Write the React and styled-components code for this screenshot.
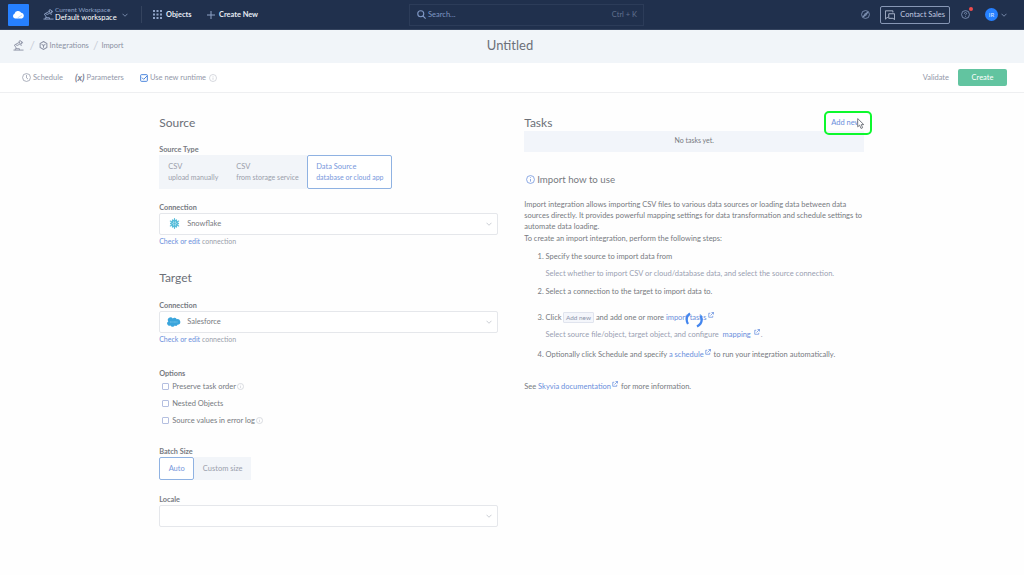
import React, { useState } from "react";
import styled, { createGlobalStyle, css } from "styled-components";

const options = [
  { label: "Preserve task order", info: true },
  { label: "Nested Objects", info: false },
  { label: "Source values in error log", info: true },
];

const sourceTypes = [
  { title: "CSV", text: "upload manually", width: 68 },
  { title: "CSV", text: "from storage service", width: 80 },
  { title: "Data Source", text: "database or cloud app", width: 85 },
];

const RobotIcon = ({ size = 12 }) => (
  <Icon $size={size} viewBox="0 0 24 24">
    <path d="M1 22h22M5 22v-3h9v3M8 19L3 11l11-6M6 10l3 2 6-3M13 3l3 6 4-2-4-6zM18 3l4 3M17 9l1 4" />
  </Icon>
);

const InfoIcon = ({ size = 8 }) => (
  <Icon $size={size} viewBox="0 0 24 24">
    <circle cx="12" cy="12" r="10.5" />
    <path d="M12 10.5v7M12 6v2" />
  </Icon>
);

const Chevron = () => (
  <Icon $size={6} viewBox="0 0 24 24" $stroke={3}>
    <path d="M2 7l10 10L22 7" />
  </Icon>
);

const ExternalIcon = () => (
  <LinkIcon viewBox="0 0 24 24">
    <path d="M9 5H3v16h16v-6M14 2h8v8M22 2L10 14" />
  </LinkIcon>
);

function Header() {
  return (
    <TopBar>
      <Logo>
        <svg width="13" height="9" viewBox="0 0 26 18">
          <path
            fill="#fff"
            d="M6 17a5 5 0 0 1-1-9.500A7.500 7.500 0 0 1 18.500 5.500 6 6 0 0 1 20 17z"
          />
          <path
            d="M11 16l9-6"
            stroke="#a9cbff"
            strokeWidth="1.500"
            fill="none"
          />
        </svg>
      </Logo>
      <Workspace>
        <RobotIcon size={11} />
        <div>
          <small>Current Workspace</small>
          <strong>Default workspace</strong>
        </div>
        <Chevron />
      </Workspace>
      <NavItem $width={43}>
        <svg width="9" height="9" viewBox="0 0 9 9" fill="#8fa3c7">
          {[0, 3.5, 7].map((y) =>
            [0, 3.5, 7].map((x) => (
              <rect key={`${x}-${y}`} x={x} y={y} width="2" height="2" />
            ))
          )}
        </svg>
        Objects
      </NavItem>
      <NavItem>
        <Icon $size={8} viewBox="0 0 24 24" $stroke={3}>
          <path d="M12 0v24M0 12h24" />
        </Icon>
        Create New
      </NavItem>
      <Search>
        <Icon $size={9} viewBox="0 0 24 24" $stroke={3}>
          <circle cx="10" cy="10" r="8" />
          <path d="M16 16l7 7" />
        </Icon>
        <span>Search...</span>
        <kbd>Ctrl + K</kbd>
      </Search>
      <Account>
        <Icon $size={9} viewBox="0 0 24 24">
          <circle cx="12" cy="12" r="10.500" />
          <path d="M18 6l-4 8-8 4 4-8zM18 6L6 18" />
        </Icon>
        <ContactButton>
          <Icon $size={10} viewBox="0 0 24 24">
            <path d="M7 18H5l-4 4V2h18v4M9 9h14v14l-4-3H9z" />
          </Icon>
          Contact Sales
        </ContactButton>
        <Help>
          <Icon $size={9} viewBox="0 0 24 24">
            <circle cx="12" cy="12" r="10.500" />
            <path d="M9 10c0-5 6-4 6-1 0 2-3 2-3 5M12 16v2" />
          </Icon>
        </Help>
        <Avatar>IR</Avatar>
        <Chevron />
      </Account>
    </TopBar>
  );
}

function Select({ icon, value }) {
  return (
    <SelectBox>
      {icon && <SelectIcon>{icon}</SelectIcon>}
      <span>{value}</span>
      <Chevron />
    </SelectBox>
  );
}

const Snowflake = () => (
  <svg width="11" height="11" viewBox="0 0 24 24">
    <g stroke="#55bcd9" strokeWidth="2.600" fill="none" strokeLinecap="round">
      {[0, 60, 120, 180, 240, 300].map((angle) => (
        <path
          key={angle}
          transform={`rotate(${angle} 12 12)`}
          d="M12 1.500v5M8 4.500L12 8l4-3.500"
        />
      ))}
      <path d="M12 10.500l1.500 1.500-1.500 1.500-1.500-1.500z" />
    </g>
  </svg>
);

const Salesforce = () => (
  <svg width="14" height="10" viewBox="0 0 28 20">
    <path
      fill="#3aa5dc"
      d="M11.500 3a5 5 0 0 1 8 1.500A5.600 5.600 0 1 1 21 15.500a4 4 0 0 1-5.500 1.700 4.700 4.700 0 0 1-8.500-.4A4.400 4.400 0 0 1 2.600 9 5.100 5.100 0 0 1 11.500 3z"
    />
    <path
      d="M6 10h15"
      stroke="#8accec"
      strokeWidth="1.500"
      strokeDasharray="2 .6"
    />
  </svg>
);

export default function App() {
  const [sourceType, setSourceType] = useState(2);
  const [batch, setBatch] = useState("Auto");

  return (
    <>
      <GlobalStyle />
      <Page>
        <Header />
        <TitleBar>
          <Breadcrumbs>
            <RobotIcon size={11} />
            <i>/</i>
            <Icon $size={9} viewBox="0 0 24 24" $stroke={2.8}>
              <path d="M12 1.500l9 5v11l-9 5-9-5v-11zM7 9l5 3 5-3M12 12v6" />
            </Icon>
            <span>Integrations</span>
            <i>/</i>
            <b>Import</b>
          </Breadcrumbs>
          <h1>Untitled</h1>
        </TitleBar>
        <Toolbar>
          <ToolItem $width={53}>
            <Icon $size={9} viewBox="0 0 24 24">
              <circle cx="12" cy="12" r="10.500" />
              <path d="M12 5v8l4 3" />
            </Icon>
            Schedule
          </ToolItem>
          <ToolItem $width={65}>
            <em>(x)</em>
            Parameters
          </ToolItem>
          <ToolItem>
            <Icon $size={8} viewBox="0 0 24 24" $stroke={3} $color="#4c86dc">
              <rect x="2" y="2" width="20" height="20" rx="2" />
              <path d="M6 11l5 5L22 5" />
            </Icon>
            Use new runtime
            <Muted $left={1}>
              <InfoIcon />
            </Muted>
          </ToolItem>
          <Validate>Validate</Validate>
          <CreateButton>Create</CreateButton>
        </Toolbar>

        <Content>
          <Column>
            <Heading>Source</Heading>
            <Field $top={14}>
              <Label>Source Type</Label>
              <Segments>
                {sourceTypes.map((type, index) => (
                  <TypeButton
                    key={type.text}
                    $width={type.width}
                    $active={index === sourceType}
                    onClick={() => setSourceType(index)}
                  >
                    <span>{type.title}</span>
                    <small>{type.text}</small>
                  </TypeButton>
                ))}
              </Segments>
            </Field>
            <Field $top={14}>
              <Label>Connection</Label>
              <Select icon={<Snowflake />} value="Snowflake" />
              <Hint>
                <a>Check or edit</a> connection
              </Hint>
            </Field>
            <Heading $top={22}>Target</Heading>
            <Field $top={15}>
              <Label>Connection</Label>
              <Select icon={<Salesforce />} value="Salesforce" />
              <Hint>
                <a>Check or edit</a> connection
              </Hint>
            </Field>
            <Field $top={23}>
              <Label>Options</Label>
              <OptionList>
                {options.map((option) => (
                  <Option key={option.label}>
                    <Checkbox />
                    {option.label}
                    {option.info && (
                      <Muted $left={-1.5}>
                        <InfoIcon size={7} />
                      </Muted>
                    )}
                  </Option>
                ))}
              </OptionList>
            </Field>
            <Field $top={18}>
              <Label>Batch Size</Label>
              <Segments>
                <BatchButton
                  $width={35}
                  $active={batch === "Auto"}
                  onClick={() => setBatch("Auto")}
                >
                  Auto
                </BatchButton>
                <BatchButton
                  $width={57}
                  $active={batch === "Custom"}
                  onClick={() => setBatch("Custom")}
                >
                  Custom size
                </BatchButton>
              </Segments>
            </Field>
            <Field $top={15}>
              <Label>Locale</Label>
              <Select />
            </Field>
          </Column>

          <Column>
            <TasksHead>
              <Heading>Tasks</Heading>
              <AddNew>
                Add new
                <Cursor viewBox="0 0 14 20">
                  <path
                    d="M1 1v15l3.500-3 2.500 6 3-1.300-2.500-5.700H12z"
                    fill="#fff"
                    stroke="#666a72"
                    strokeWidth="1.600"
                  />
                </Cursor>
              </AddNew>
            </TasksHead>
            <Empty>No tasks yet.</Empty>
            <HowTo>
              <InfoIcon size={9} />
              Import how to use
            </HowTo>
            <Paragraph>
              Import integration allows importing CSV files to various data
              sources or loading data between data
              <br />
              sources directly. It provides powerful mapping settings for data
              transformation and schedule settings to
              <br />
              automate data loading.
              <br />
              To create an import integration, perform the following steps:
            </Paragraph>
            <Steps>
              <Step $height={35}>
                Specify the source to import data from
                <p>
                  Select whether to import CSV or cloud/database data, and
                  select the source connection.
                </p>
              </Step>
              <Step $height={26}>
                Select a connection to the target to import data to.
              </Step>
              <Step $height={37}>
                Click <Key>Add new</Key> and add one or more{" "}
                <Busy>
                  import tasks
                  <Spinner viewBox="0 0 18 18">
                    <path d="M5 2.500Q-.5 6.500 3 13M15.500 4.500Q19 11.500 12 15.500" />
                  </Spinner>
                </Busy>
                <ExternalIcon />
                <p>
                  Select source file/object, target object, and configure{" "}
                  <a>&nbsp;mapping</a> <ExternalIcon />.
                </p>
              </Step>
              <Step>
                Optionally click Schedule and specify <a>a schedule</a>
                <ExternalIcon /> to run your integration automatically.
              </Step>
            </Steps>
            <Footer>
              See <a>Skyvia documentation</a>
              <ExternalIcon /> for more information.
            </Footer>
          </Column>
        </Content>
      </Page>
    </>
  );
}

const GlobalStyle = createGlobalStyle`
  * {
    box-sizing: border-box;
  }
  body {
    margin: 0;
    background: #fefefe;
    color: #777a81;
    font-family: Lato, "Liberation Sans", sans-serif;
    font-size: 7.5px;
    overflow: hidden;
  }
  button {
    font: inherit;
    cursor: pointer;
  }
  a {
    color: #6a8fdc;
    cursor: pointer;
  }
  h1, h2, p {
    margin: 0;
    font-weight: 400;
  }
`;

const Page = styled.div`
  height: 575px;
  display: flex;
  flex-direction: column;
`;

const Icon = styled.svg`
  width: ${(p) => p.$size}px;
  height: ${(p) => p.$size}px;
  flex: none;
  fill: none;
  stroke: ${(p) => p.$color || "currentColor"};
  stroke-width: ${(p) => p.$stroke || 2};
`;

const TopBar = styled.header`
  height: 30px;
  flex: none;
  display: flex;
  align-items: center;
  padding: 0 17px 0 7.5px;
  background: #20304d;
  border-bottom: 1px solid #35445f;
  color: #8fa3c7;
`;

const Logo = styled.div`
  width: 21.5px;
  height: 22px;
  border-radius: 1px;
  background: #2680ff;
  display: flex;
  align-items: center;
  justify-content: center;
`;

const Workspace = styled.div`
  width: 99px;
  height: 17px;
  margin-left: 14px;
  display: flex;
  align-items: center;
  border-right: 1px solid #34435e;
  div {
    width: 67px;
    margin: -1px 0 0 1px;
    white-space: nowrap;
  }
  small,
  strong {
    display: block;
    line-height: 8px;
  }
  small {
    font-size: 6.5px;
  }
  strong {
    font-size: 7.5px;
    font-weight: 400;
    color: #fff;
  }
`;

const NavItem = styled.div`
  min-width: ${(p) => p.$width || 0}px;
  display: flex;
  align-items: center;
  gap: 4px;
  margin-left: 11px;
  font-weight: 700;
  font-size: 7.4px;
  color: #e6ebf4;
  svg {
    color: #8fa3c7;
  }
`;

const Search = styled.div`
  width: 235px;
  height: 22px;
  margin-left: 151px;
  padding: 0 6px 0 7px;
  border: 1px solid #2c3c59;
  display: flex;
  align-items: center;
  gap: 2px;
  color: #7f97c4;
  span {
    flex: 1;
  }
  kbd {
    font: inherit;
    color: #61708d;
  }
`;

const Account = styled.div`
  margin-left: auto;
  display: flex;
  align-items: center;
`;

const ContactButton = styled.button`
  width: 70px;
  height: 18px;
  margin: 0 10.5px 0 10.5px;
  padding: 0 4px 0 4px;
  border: 1px solid #8797b5;
  border-radius: 2px;
  background: none;
  color: #c0cbe0;
  display: flex;
  align-items: center;
  justify-content: space-between;
  white-space: nowrap;
`;

const Help = styled.div`
  position: relative;
  display: flex;
  margin-right: 15.5px;
  &::after {
    content: "";
    position: absolute;
    top: -3px;
    right: -3px;
    width: 4px;
    height: 4px;
    border-radius: 50%;
    background: #f04c4c;
  }
`;

const Avatar = styled.div`
  width: 13px;
  height: 13px;
  margin-right: 3px;
  border-radius: 50%;
  background: #2680ff;
  color: #dbe8ff;
  font-size: 6px;
  display: flex;
  align-items: center;
  justify-content: center;
`;

const TitleBar = styled.div`
  height: 33px;
  flex: none;
  display: grid;
  grid-template-columns: 1fr auto 1fr;
  align-items: center;
  padding: 0 17px 3px 13px;
  background: #f1f5f9;
  h1 {
    font-size: 13px;
    color: #6c7078;
  }
`;

const Breadcrumbs = styled.nav`
  display: flex;
  align-items: center;
  color: #8c92a4;
  i {
    width: 9px;
    margin: 0 0 0 5.5px;
    font-size: 12px;
    font-style: normal;
    color: #c9ced8;
  }
  span {
    margin-left: 2px;
  }
  i:nth-of-type(2) {
    margin-left: 4px;
  }
  b {
    margin-left: -0.5px;
    font-weight: 400;
  }
`;

const Toolbar = styled.div`
  height: 30px;
  flex: none;
  display: flex;
  align-items: center;
  padding: 0 17px 0 22px;
  border-bottom: 1px solid #eeeff1;
  background: #fff;
  color: #9398a9;
`;

const ToolItem = styled.div`
  min-width: ${(p) => p.$width || 0}px;
  display: flex;
  align-items: center;
  gap: 2px;
  em {
    font-weight: 700;
    font-size: 9.4px;
    color: #7a8094;
  }
`;

const Muted = styled.span`
  display: inline-flex;
  margin-left: ${(p) => p.$left}px;
  color: #c3c6ce;
`;

const Validate = styled.div`
  margin-left: auto;
`;

const CreateButton = styled.button`
  width: 49px;
  height: 17px;
  margin-left: 9px;
  border: 0;
  border-radius: 2px;
  background: #62c4a0;
  color: #fff;
`;

const Content = styled.main`
  display: grid;
  grid-template-columns: 339px 340px;
  column-gap: 26px;
  padding: 22px 0 0 159.2px;
`;

const Column = styled.section`
  min-width: 0;
`;

const Heading = styled.h2`
  height: 16px;
  margin-top: ${(p) => p.$top || 0}px;
  line-height: 16px;
  font-size: 12px;
  color: #6c7078;
`;

const Field = styled.div`
  margin-top: ${(p) => p.$top}px;
`;

const Label = styled.div`
  height: 10px;
  line-height: 9px;
  font-weight: 700;
  font-size: 7.3px;
  color: #777a81;
`;

const Segments = styled.div`
  display: flex;
`;

const segment = css`
  width: ${(p) => p.$width}px;
  border: 1px solid ${(p) => (p.$active ? "#8fb2e2" : "#f2f5f9")};
  border-radius: ${(p) => (p.$active ? 2 : 0)}px;
  background: ${(p) => (p.$active ? "#fff" : "#f2f5f9")};
  color: ${(p) => (p.$active ? "#7898dc" : "#9a9eab")};
  white-space: nowrap;
`;

const TypeButton = styled.button`
  ${segment}
  height: 34px;
  padding: 0 0 0 8px;
  text-align: left;
  span,
  small {
    display: block;
    line-height: 11px;
  }
  small {
    font-size: 7px;
  }
`;

const BatchButton = styled.button`
  ${segment}
  height: 23px;
  padding: 0;
`;

const SelectBox = styled.div`
  height: 22px;
  padding: 0 5px 1px 7px;
  border: 1px solid #e5e7eb;
  border-radius: 2px;
  background: #fff;
  display: flex;
  align-items: center;
  span {
    flex: 1;
  }
  & > svg {
    color: #b9bdc6;
  }
`;

const SelectIcon = styled.div`
  width: 14px;
  margin-right: 6px;
  display: flex;
  justify-content: center;
`;

const Hint = styled.div`
  height: 13px;
  line-height: 12px;
  font-size: 7px;
  color: #9a9eab;
`;

const OptionList = styled.div`
  margin-top: -1px;
`;

const Option = styled.label`
  height: 17px;
  padding-left: 3px;
  display: flex;
  align-items: center;
  gap: 3px;
`;

const Checkbox = styled.span`
  width: 7px;
  height: 7px;
  border: 1px solid #b4bfe0;
  border-radius: 1px;
  background: #fff;
`;

const TasksHead = styled.div`
  display: flex;
  justify-content: space-between;
`;

const AddNew = styled.div`
  position: relative;
  width: 48px;
  height: 24px;
  margin: -4px -8px -4px 0;
  padding-left: 5px;
  border: 2px solid #0df82d;
  border-radius: 5px;
  color: #6a8fdc;
  line-height: 20px;
`;

const Cursor = styled.svg`
  position: absolute;
  left: 31px;
  top: 5px;
  width: 8px;
  height: 11px;
`;

const Empty = styled.div`
  height: 21px;
  line-height: 19px;
  text-align: center;
  font-size: 7px;
  background: #f2f5fa;
`;

const HowTo = styled.h2`
  height: 14px;
  margin: 20px 0 0 2px;
  display: flex;
  align-items: center;
  gap: 2px;
  font-size: 9.7px;
  svg {
    color: #6a8fdc;
  }
`;

const Paragraph = styled.p`
  margin-top: 13px;
  line-height: 11.2px;
  white-space: nowrap;
`;

const Steps = styled.ol`
  margin: 7px 0 0;
  padding-left: 21.4px;
`;

const Step = styled.li`
  height: ${(p) => p.$height || 11}px;
  line-height: 11px;
  white-space: nowrap;
  p {
    margin-top: 6px;
    color: #9a9eb2;
  }
`;

const Key = styled.span`
  display: inline-block;
  height: 11px;
  padding: 0 2px;
  margin-left: -0.5px;
  border: 1px solid #e0e4ee;
  border-radius: 1px;
  background: #f4f6fb;
  color: #8c93aa;
  font-size: 6.4px;
  line-height: 9px;
`;

const LinkIcon = styled.svg`
  width: 6px;
  height: 6px;
  margin: 0 0.5px 0 1.5px;
  vertical-align: 2px;
  fill: none;
  stroke: #5c88dc;
  stroke-width: 2.8;
`;

const Busy = styled.a`
  position: relative;
`;

const Spinner = styled.svg`
  position: absolute;
  left: 19px;
  top: -2px;
  width: 18px;
  height: 18px;
  fill: none;
  stroke: #4486ee;
  stroke-width: 2.2;
`;

const Footer = styled.div`
  margin-top: 21px;
  line-height: 12px;
`;
